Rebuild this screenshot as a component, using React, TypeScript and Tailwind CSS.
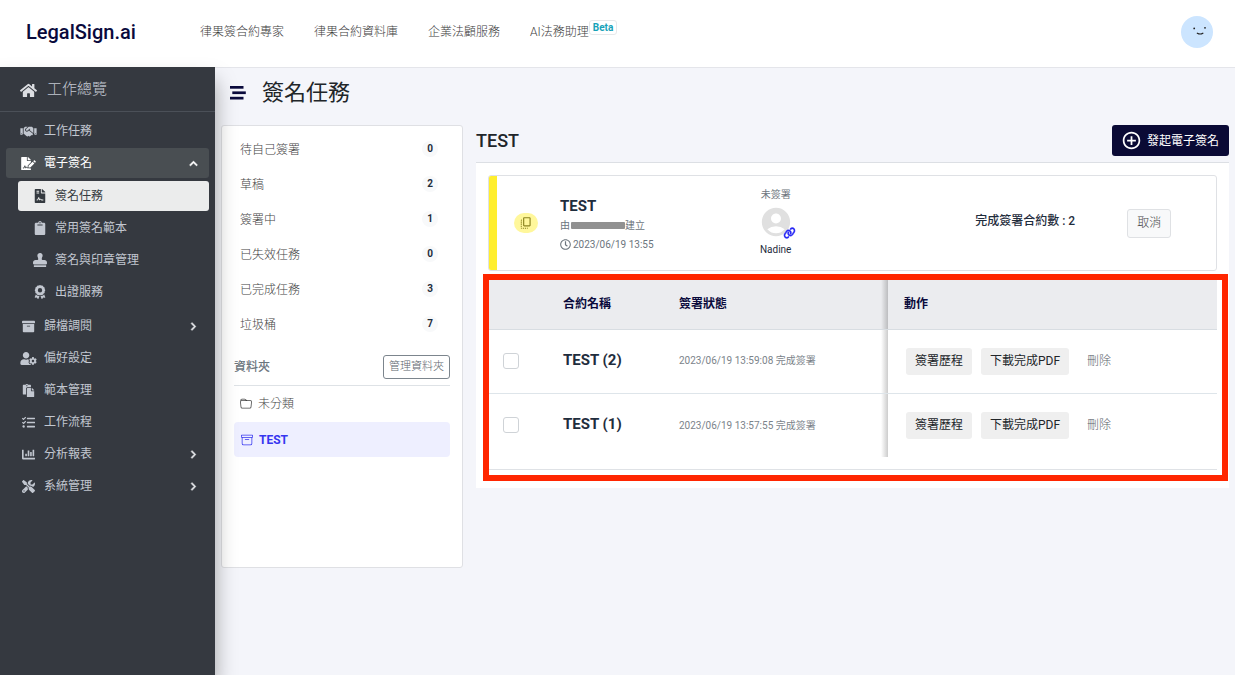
import React, { useState } from "react";
import type { IconType } from "react-icons";
import {
  FaArchive,
  FaChartBar,
  FaClipboard,
  FaFileContract,
  FaFileSignature,
  FaHandshake,
  FaHome,
  FaPaste,
  FaRegClock,
  FaStamp,
  FaTasks,
  FaUserCog,
  FaChevronRight,
  FaChevronUp,
} from "react-icons/fa";
import { FaAward, FaScrewdriverWrench, FaLink } from "react-icons/fa6";
import { MdAccountCircle, MdAddCircleOutline, MdCopyAll } from "react-icons/md";
import { BsArchive, BsFolder } from "react-icons/bs";

const topLinks = ["律果簽合約專家", "律果合約資料庫", "企業法顧服務"];

type NavEntry = { label: string; icon: IconType; expandable?: boolean };

const signatureItems: NavEntry[] = [
  { label: "簽名任務", icon: FaFileContract },
  { label: "常用簽名範本", icon: FaClipboard },
  { label: "簽名與印章管理", icon: FaStamp },
  { label: "出證服務", icon: FaAward },
];

const lowerItems: NavEntry[] = [
  { label: "歸檔調閱", icon: FaArchive, expandable: true },
  { label: "偏好設定", icon: FaUserCog },
  { label: "範本管理", icon: FaPaste },
  { label: "工作流程", icon: FaTasks },
  { label: "分析報表", icon: FaChartBar, expandable: true },
  { label: "系統管理", icon: FaScrewdriverWrench, expandable: true },
];

const folders = [
  { label: "待自己簽署", count: 0 },
  { label: "草稿", count: 2 },
  { label: "簽署中", count: 1 },
  { label: "已失效任務", count: 0 },
  { label: "已完成任務", count: 3 },
  { label: "垃圾桶", count: 7 },
];

const contracts = [
  { name: "TEST (2)", status: "2023/06/19 13:59:08 完成簽署" },
  { name: "TEST (1)", status: "2023/06/19 13:57:55 完成簽署" },
];

function Header() {
  return (
    <header className="flex h-[67px] items-center bg-white pl-[26px] pr-[22px]">
      <a href="#home" className="w-[174px] shrink-0 pb-1 text-xl font-medium leading-7 text-[#0a0a3c]">
        LegalSign.ai
      </a>
      <nav className="flex flex-1 items-center gap-[30px] pb-1 text-xs font-light text-[#3c3c3c]">
        {topLinks.map((label) => (
          <a key={label} href="#top">
            {label}
          </a>
        ))}
        <a href="#ai" className="flex items-center">
          AI法務助理
          <span className="mb-2 rounded-[3px] border border-[#e6e8ea] px-[3px] text-[10px] font-bold leading-[13px] text-[#17a2b8]">
            Beta
          </span>
        </a>
      </nav>
      <button type="button" aria-label="帳號" className="mb-[3px] size-8 shrink-0">
        <svg viewBox="0 0 32 32" className="size-8">
          <circle cx="16" cy="16" r="16" fill="#cce5ff" />
          <circle cx="13.2" cy="12.4" r="0.9" fill="#222" />
          <circle cx="24" cy="11.8" r="0.9" fill="#222" />
          <path d="M16.3 17.2q3 1.6 5.6 0" fill="none" stroke="#222" strokeWidth="1.2" strokeLinecap="round" />
        </svg>
      </button>
    </header>
  );
}

function NavItem({ label, icon: Icon, expandable }: NavEntry) {
  return (
    <li>
      <a href="#nav" className="flex h-[30px] items-center pl-[14px] pr-[11px]">
        <Icon className="mr-[7px] h-[13px] w-[17px] shrink-0" />
        <span className="flex-1">{label}</span>
        {expandable && <FaChevronRight className="size-[9px] text-[#e3e5e8]" stroke="currentColor" strokeWidth="30" />}
      </a>
    </li>
  );
}

function Sidebar() {
  return (
    <aside className="relative z-10 w-[215px] shrink-0 bg-[#353940] text-xs text-[#c2c7d0] shadow-[0_14px_20px_rgba(0,0,0,0.35)]">
      <a
        href="#overview"
        className="flex h-[45px] items-center gap-[10px] border-b border-[#4b5058] pl-5 pt-[2px] text-[15px] font-light"
      >
        <FaHome className="size-[17px] text-[#dcdee2]" />
        工作總覽
      </a>
      <nav className="px-[6px] pt-[4px]">
        <ul className="flex flex-col gap-[2px]">
          <NavItem label="工作任務" icon={FaHandshake} />
          <li>
            <button
              type="button"
              className="flex h-[30px] w-full items-center rounded-[3px] bg-[#494e52] pl-[14px] pr-[11px] text-left text-white"
            >
              <FaFileSignature className="mr-[7px] h-[13px] w-[17px]" />
              <span className="flex-1">電子簽名</span>
              <FaChevronUp className="size-[9px]" stroke="currentColor" strokeWidth="30" />
            </button>
            <ul className="flex flex-col gap-[2px] pb-[2px] pl-3 pt-[3px]">
              {signatureItems.map(({ label, icon: Icon }, i) => (
                <li key={label}>
                  <a
                    href="#signature"
                    className={
                      i === 0
                        ? "flex h-[30px] items-center rounded-[3px] bg-[#ebecec] pl-[15px] text-[#343a40]"
                        : "flex h-[30px] items-center pl-[15px]"
                    }
                  >
                    <Icon className="mr-2 size-[14px]" />
                    {label}
                  </a>
                </li>
              ))}
            </ul>
          </li>
          {lowerItems.map((item) => (
            <NavItem key={item.label} {...item} />
          ))}
        </ul>
      </nav>
    </aside>
  );
}

function FolderPanel() {
  return (
    <section className="flex min-h-[443px] w-[242px] shrink-0 flex-col rounded-[3px] border border-[#dfe0e4] bg-white px-3 pt-[6px] text-xs font-light text-[#444]">
      <ul>
        {folders.map(({ label, count }) => (
          <li key={label}>
            <a href="#folder" className="flex h-[35px] items-center justify-between pl-[6px] pr-3">
              {label}
              <span className="mb-[2px] flex size-4 items-center justify-center rounded-full bg-[#f8f9fa] text-[10px] font-bold text-[#1f2d3d]">
                {count}
              </span>
            </a>
          </li>
        ))}
      </ul>
      <div className="mt-[13px] flex items-center justify-between border-b border-[#dee2e6] pb-[6px]">
        <h2 className="font-medium text-[#6c757d]">資料夾</h2>
        <button
          type="button"
          className="h-6 rounded-[3px] border border-[#7c858d] px-[5px] text-[11px] text-[#5c656d]"
        >
          管理資料夾
        </button>
      </div>
      <a href="#uncategorized" className="flex h-9 items-center gap-[6px] pl-[6px]">
        <BsFolder className="size-3" />
        未分類
      </a>
      <a
        href="#test"
        className="flex h-[35px] items-center gap-[6px] rounded-[4px] bg-[#eeefff] pl-[7px] font-bold text-[#3636f0]"
      >
        <BsArchive className="size-3" />
        TEST
      </a>
    </section>
  );
}

function TaskCard() {
  return (
    <article className="grid h-24 grid-cols-[8px_63px_130fr_172fr_248fr_107fr] items-center overflow-hidden rounded-[3px] border border-[#dfe1e5]">
      <span className="h-full bg-[#ffee2e]" />
      <span className="ml-[17px] flex h-5 w-6 items-center justify-center rounded-full bg-[#fff79b] text-[#8c8420]">
        <MdCopyAll className="size-[14px]" />
      </span>
      <div className="pt-[3px] text-[10px] text-[#6c757d]">
        <h3 className="text-[15px] font-bold leading-5 text-[#1f2d3d]">TEST</h3>
        <p className="flex items-center leading-[19px]">
          由
          <span className="ml-[1px] h-[7px] w-[54px] rounded-[1px] bg-[#919191]" />
          建立
        </p>
        <p className="flex items-center gap-[2px] leading-[19px]">
          <FaRegClock className="size-[11px]" />
          2023/06/19 13:55
        </p>
      </div>
      <div className="flex flex-col items-center text-[10px]">
        <span className="leading-[14px] text-[#6c757d]">未簽署</span>
        <span className="relative my-[3px]">
          <MdAccountCircle className="size-[34px] text-[#e0e0e0]" />
          <FaLink
            className="absolute -right-[3px] bottom-0 h-3 w-[13px] -rotate-12 text-[#2b2bf5]"
            stroke="currentColor"
            strokeWidth="20"
          />
        </span>
        <span className="leading-4 text-[#1f2d3d]">Nadine</span>
      </div>
      <p className="pb-1 pr-[34px] text-right text-xs font-medium text-[#1f2d3d]">完成簽署合約數 : 2</p>
      <div className="pl-[18px]">
        <button
          type="button"
          className="h-[29px] rounded-[3px] border border-[#dfe1e4] bg-[#f8f9fa] px-[9px] text-xs font-light text-[#444]"
        >
          取消
        </button>
      </div>
    </article>
  );
}

function ContractTable() {
  const [selected, setSelected] = useState<string[]>([]);
  const toggle = (name: string) =>
    setSelected((prev) => (prev.includes(name) ? prev.filter((n) => n !== name) : [...prev, name]));
  const edge =
    "relative pl-3 after:absolute after:inset-y-0 after:right-0 after:w-[7px] after:bg-linear-to-l after:from-black/20 after:to-transparent";

  return (
    <div className="relative mt-[9px] pb-[5px]">
      <div className="border-b border-[#dfe2e6] pb-3">
        <table className="w-full table-fixed border-collapse text-left text-xs">
          <thead>
            <tr className="h-[49px] border-b border-[#d8dde2] bg-[#ebecef] text-[#0a0a3c]">
              <th className="w-[63px]" aria-label="選取" />
              <th className="w-[116px] pl-3 font-bold">合約名稱</th>
              <th className={edge + " w-[221px] font-bold"}>簽署狀態</th>
              <th className="pl-4 font-bold">動作</th>
            </tr>
          </thead>
          <tbody>
            {contracts.map(({ name, status }) => (
              <tr key={name} className="h-16 border-b border-[#dee5ea] last:border-b-0">
                <td className="pl-[15px]">
                  <input
                    type="checkbox"
                    aria-label={name}
                    checked={selected.includes(name)}
                    onChange={() => toggle(name)}
                    className="block size-4 appearance-none rounded-[3px] border border-[#cfd3d7] bg-white checked:bg-[#3636f0]"
                  />
                </td>
                <td className="pl-3 text-[15px] font-bold text-[#1f2d3d]">{name}</td>
                <td className={edge + " text-[10px] text-[#7b838a]"}>{status}</td>
                <td className="pl-[18px]">
                  <div className="flex items-center gap-[9px]">
                    <button type="button" className="h-[27px] rounded-[3px] bg-[#efefef] px-[9px] text-[#212529]">
                      簽署歷程
                    </button>
                    <button type="button" className="h-[27px] rounded-[3px] bg-[#efefef] px-[9px] text-[#212529]">
                      下載完成PDF
                    </button>
                    <button type="button" className="px-[9px] font-light text-[#5c656d]">
                      刪除
                    </button>
                  </div>
                </td>
              </tr>
            ))}
          </tbody>
        </table>
      </div>
      <div className="pointer-events-none absolute -bottom-[6px] -left-[5px] -right-[11px] -top-[6px] border-[6px] border-[#ff2600]" />
    </div>
  );
}

export default function App() {
  return (
    <div className="flex min-h-screen flex-col bg-[#f4f5fa] font-['Roboto','Noto_Sans_CJK_TC',sans-serif] text-[#212529]">
      <Header />
      <div className="flex flex-1">
        <Sidebar />
        <main className="min-w-0 flex-1 border-t border-[#e4e5ea] px-[6px]">
          <h1 className="flex h-[57px] items-center gap-4 pb-2 pl-[9px] text-[22px]">
            <svg viewBox="0 0 16 14" className="h-[14px] w-4" fill="#0a0a3c">
              <rect x="0" y="0" width="13.5" height="2.7" />
              <rect x="2.3" y="5.4" width="13.5" height="2.7" />
              <rect x="0" y="10.8" width="13.5" height="2.7" />
            </svg>
            簽名任務
          </h1>
          <div className="flex items-start gap-[13px]">
            <FolderPanel />
            <section className="min-w-0 flex-1">
              <div className="flex items-start justify-between pb-[6px]">
                <h2 className="text-lg font-medium leading-[31px]">TEST</h2>
                <button
                  type="button"
                  className="flex h-[31px] items-center gap-[5px] rounded-[3px] bg-[#0a0a35] pl-[9px] pr-[10px] text-xs text-white"
                >
                  <MdAddCircleOutline className="size-[21px]" />
                  發起電子簽名
                </button>
              </div>
              <div className="border-t border-[#dcdfe4] bg-white px-3 pb-[13px] pt-3">
                <TaskCard />
                <ContractTable />
              </div>
            </section>
          </div>
        </main>
      </div>
    </div>
  );
}
